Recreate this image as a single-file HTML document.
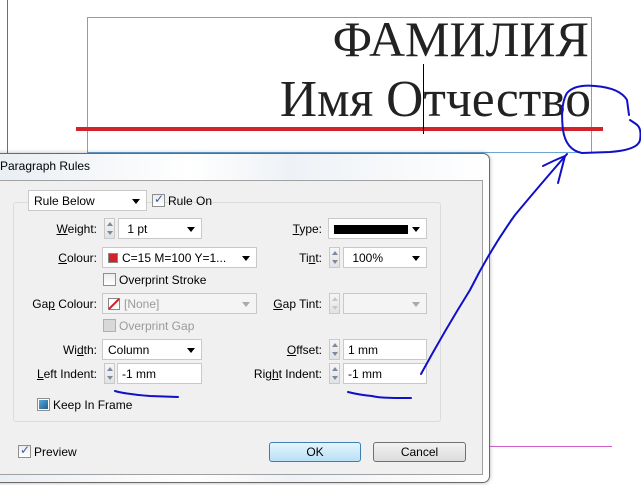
<!DOCTYPE html>
<html><head><meta charset="utf-8"><style>
*{margin:0;padding:0;box-sizing:border-box}
body{width:641px;height:485px;background:#fff;position:relative;overflow:hidden;font-family:"Liberation Sans",sans-serif;font-size:12px;color:#000}
.a{position:absolute}
.big{font-family:"Liberation Serif",serif;color:#222;font-size:50px;line-height:1;white-space:nowrap}
.lbl{position:absolute;text-align:right;white-space:nowrap;font-size:12px}
.dd{position:absolute;background:#fff;border:1px solid #c9c9c9;height:21px;padding:3px 0 0 5px;white-space:nowrap}
.dd:after{content:"";position:absolute;right:6px;top:8px;border-left:4px solid transparent;border-right:4px solid transparent;border-top:5px solid #000}
.dd.dis{color:#9a9a9a;background:#f4f4f4}
.dd.dis:after{border-top-color:#aaa}
.sp{position:absolute;width:11px;height:21px;border:1px solid #c9c9c9;background:linear-gradient(#f6f6f6,#e2e2e2)}
.sp:before{content:"";position:absolute;left:2px;top:3px;border-left:3px solid transparent;border-right:3px solid transparent;border-bottom:4px solid #7a8aa0}
.sp:after{content:"";position:absolute;left:2px;bottom:3px;border-left:3px solid transparent;border-right:3px solid transparent;border-top:4px solid #7a8aa0}
.sp.dis:before{border-bottom-color:#c8c8c8}.sp.dis:after{border-top-color:#c8c8c8}
.cb{position:absolute;width:13px;height:13px;border:1px solid #8e8f8f;background:linear-gradient(#ececec,#fff)}
.in{position:absolute;background:#fff;border:1px solid #c9c9c9;height:21px;padding:3px 0 0 4px}
u{text-decoration:underline}
.btn{position:absolute;height:20px;border:1px solid #707070;border-radius:3px;text-align:center;padding-top:2px;background:linear-gradient(#f2f2f2,#dcdcdc)}
</style></head><body>
<div class="a" style="left:7px;top:0;width:1px;height:153px;background:#8a4fc8"></div>
<div class="a" style="left:87px;top:17px;width:505px;height:136px;border:1px solid #6aa6d8"></div>
<div class="a big" style="right:52px;top:14px">ФАМИЛИЯ</div>
<div class="a big" style="right:50px;top:74px;font-size:51.5px">Имя Отчество</div>
<div class="a" style="left:76px;top:127px;width:527px;height:4px;background:#d2232a"></div>
<div class="a" style="left:423px;top:64px;width:1px;height:70px;background:#000"></div>
<div class="a" style="left:490px;top:446px;width:122px;height:1px;background:#d060c8"></div>

<div class="a" style="left:-10px;top:153px;width:500px;height:330px;border:1px solid #6a6a6a;border-radius:7px;background:linear-gradient(90deg,#e9eef3,#fff 40%,#eef2f6 60%,#fff);box-shadow:0 0 4px rgba(0,0,0,.3)"></div>
<div class="a" style="left:0;top:159px;font-size:12px">Paragraph Rules</div>
<div class="a" style="left:-2px;top:180px;width:485px;height:295px;background:#f0f0f0;border:1px solid #a0a0a0"></div>
<div class="a" style="left:13px;top:202px;width:428px;height:220px;border:1px solid #dcdcdc;border-radius:3px;background:#f0f0f0"></div>

<div class="dd" style="left:28px;top:190px;width:119px">Rule Below</div>
<div class="cb" style="left:152px;top:194px"><span style="position:absolute;left:1px;top:-3px;color:#3b58a0;font-size:12px">✓</span></div>
<div class="a" style="left:168px;top:194px">Rule On</div>

<div class="lbl" style="right:544px;top:222px"><u>W</u>eight:</div>
<div class="sp" style="left:104px;top:218px"></div>
<div class="dd" style="left:118px;top:218px;width:84px">&nbsp;1 pt</div>
<div class="lbl" style="right:319px;top:222px"><u>T</u>ype:</div>
<div class="dd" style="left:328px;top:218px;width:99px"><span style="display:inline-block;width:74px;height:9px;background:#000;margin-top:3px"></span></div>

<div class="lbl" style="right:544px;top:251px"><u>C</u>olour:</div>
<div class="dd" style="left:102px;top:247px;width:155px"><span style="display:inline-block;width:10px;height:10px;background:#d2232a;border:1px solid #888;vertical-align:-1px;margin-right:4px"></span>C=15 M=100 Y=1...</div>
<div class="lbl" style="right:319px;top:251px">Ti<u>n</u>t:</div>
<div class="sp" style="left:329px;top:247px"></div>
<div class="dd" style="left:343px;top:247px;width:84px">&nbsp;100%</div>

<div class="cb" style="left:103px;top:273px"></div>
<div class="a" style="left:119px;top:273px">Overprint Stroke</div>

<div class="lbl" style="right:544px;top:297px">Ga<u>p</u> Colour:</div>
<div class="dd dis" style="left:102px;top:293px;width:155px"><svg width="12" height="12" style="vertical-align:-2px;margin-right:4px"><rect x=".5" y=".5" width="11" height="11" fill="#fff" stroke="#888"/><line x1="1" y1="11" x2="11" y2="1" stroke="#d2232a" stroke-width="2"/></svg>[None]</div>
<div class="lbl" style="right:319px;top:297px"><u>G</u>ap Tint:</div>
<div class="sp dis" style="left:329px;top:293px"></div>
<div class="dd dis" style="left:343px;top:293px;width:84px"></div>

<div class="cb" style="left:103px;top:319px;background:#d8d8d8;border-color:#b0b0b0"></div>
<div class="a" style="left:119px;top:319px;color:#9a9a9a">Overprint Gap</div>

<div class="lbl" style="right:544px;top:343px">Wi<u>d</u>th:</div>
<div class="dd" style="left:102px;top:339px;width:100px">Column</div>
<div class="lbl" style="right:319px;top:343px"><u>O</u>ffset:</div>
<div class="sp" style="left:329px;top:339px"></div>
<div class="in" style="left:343px;top:339px;width:84px">1 mm</div>

<div class="lbl" style="right:544px;top:367px"><u>L</u>eft Indent:</div>
<div class="sp" style="left:104px;top:363px"></div>
<div class="in" style="left:117px;top:363px;width:85px">-1 mm</div>
<div class="lbl" style="right:319px;top:367px">Rig<u>h</u>t Indent:</div>
<div class="sp" style="left:329px;top:363px"></div>
<div class="in" style="left:343px;top:363px;width:84px">-1 mm</div>

<div class="cb" style="left:37px;top:398px;background:#fff"><div style="position:absolute;left:1px;top:1px;width:9px;height:9px;background:linear-gradient(135deg,#5aa8d8,#1f5f90)"></div></div>
<div class="a" style="left:53px;top:398px">Keep In Frame</div>

<div class="cb" style="left:18px;top:445px"><span style="position:absolute;left:1px;top:-3px;color:#3b58a0">✓</span></div>
<div class="a" style="left:34px;top:445px">Preview</div>
<div class="btn" style="left:269px;top:442px;width:92px;border-color:#3c7fb1;background:linear-gradient(#e5f4fc,#b9e0f5)">OK</div>
<div class="btn" style="left:373px;top:442px;width:93px">Cancel</div>

<svg class="a" style="left:0;top:0" width="641" height="485" fill="none" stroke="#1010c8" stroke-width="2" stroke-linecap="round">
<path d="M630,120 L636,124 Q642,128 640,140 Q638,150 610,152 L582,153 Q566,150 563,130 Q560,105 567,93 Q575,84 595,86 Q620,88 627,100 L629,115"/>
<path d="M421,374 Q445,330 470,290 Q490,250 515,215 Q540,185 567,154"/>
<path d="M543,166 Q555,160 565,156 L558,183"/>
<path d="M115,391 Q125,394 150,396 L178,397"/>
<path d="M348,392 Q360,395 372,396 Q380,398 395,398 L411,398"/>
</svg>
</body></html>
